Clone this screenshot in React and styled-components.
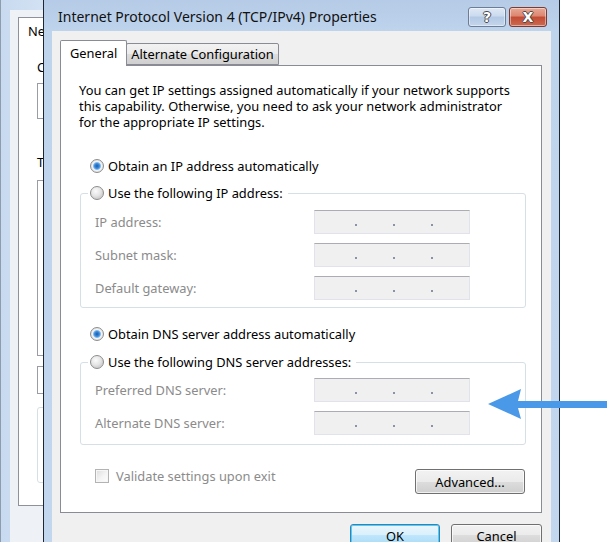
import React from 'react';
import styled, { createGlobalStyle } from 'styled-components';

const GlobalStyle = createGlobalStyle`
  html, body { margin: 0; padding: 0; background: #fff; }
  body {
    font-family: "Noto Sans", "Open Sans", sans-serif;
    font-size: 12.85px;
    color: #000;
  }
  * { box-sizing: border-box; }
`;

const Desktop = styled.div`
  position: relative;
  width: 607px;
  height: 542px;
  overflow: hidden;
  background: #fff;
`;

/* ---- window behind (adapter properties), only its left strip shows ---- */

const BackWindow = styled.div`
  position: absolute;
  left: 0;
  top: -20px;
  width: 44px;
  height: 600px;
  overflow: hidden;
  border-left: 1px solid #8f9cab;
  background: linear-gradient(to right, #c8daf0, #d3e2f3);
  padding: 30px 0 0 9px;
`;

const BackClient = styled.div`
  height: 100%;
  width: 300px;
  background: #eef1f5;
  padding: 7px 0 0 8px;
`;

const BackPanel = styled.div`
  height: 489px;
  background: #fff;
  border: 1px solid #8e9199;
  padding: 5px 0 0 18px;
`;

const BackTab = styled.div`
  margin-left: -9px;
  line-height: 16px;
`;

const BackLabel = styled.div`
  margin-top: ${p => p.$top}px;
  line-height: 16px;
  white-space: nowrap;
`;

const BackBox = styled.div`
  margin-top: ${p => p.$top}px;
  height: ${p => p.$h}px;
  width: 240px;
  border: 1px solid ${p => p.$soft ? '#d5dfe5' : '#9a9da5'};
  border-radius: ${p => p.$soft ? 3 : 0}px;
  background: #fff;
`;

/* ---- the dialog ---- */

const Dialog = styled.div`
  position: absolute;
  left: 43px;
  top: -8px;
  width: 517px;
  height: 600px;
  border: 1px solid #1d2733;
  background: linear-gradient(to bottom, #b3c9e5 0, #bed3ec 38px, #c3d7ef 100%);
  padding: 0 8px;
  display: flex;
  flex-direction: column;
`;

const TitleBar = styled.div`
  height: 38px;
  flex: none;
  display: flex;
  align-items: flex-end;
  padding: 0 4px 4px 6px;
`;

const Title = styled.div`
  flex: 1;
  line-height: 20px;
  font-size: 14px;
  color: #111;
  white-space: nowrap;
`;

const CaptionButton = styled.div`
  width: 38px;
  height: 20px;
  border-radius: 3px;
  margin-left: 3px;
  display: flex;
  align-items: center;
  justify-content: center;
  font-family: "DejaVu Sans", sans-serif;
  font-weight: bold;
  font-size: 14px;
  color: #fff;
  text-shadow: -1px 0 #4a4a4a, 1px 0 #4a4a4a, 0 -1px #4a4a4a, 0 1px #4a4a4a;
  border: 1px solid ${p => p.$close ? '#7a3b33' : '#6c7d95'};
  background: ${p => p.$close
    ? 'linear-gradient(#e9a895 0%, #dc8670 45%, #c24b33 50%, #cc6a52 100%)'
    : 'linear-gradient(#dfe9f5 0%, #cbdaee 45%, #b2c8e4 50%, #c4d6ec 100%)'};
  box-shadow: inset 0 0 0 1px rgba(255, 255, 255, 0.45);
`;

const Client = styled.div`
  flex: 1;
  background: #f0f0f0;
  padding: 9px 9px 0 8px;
`;

const TabStrip = styled.div`
  height: 25px;
  display: flex;
  align-items: flex-end;
`;

const Tab = styled.div`
  position: relative;
  height: ${p => p.$active ? 26 : 22}px;
  margin-bottom: ${p => p.$active ? -1 : 0}px;
  padding: 0 ${p => p.$active ? 9 : 4}px;
  margin-left: ${p => p.$active ? 0 : -1}px;
  z-index: ${p => p.$active ? 1 : 0};
  border: 1px solid #898c95;
  border-bottom: ${p => p.$active ? 'none' : '1px solid #898c95'};
  border-radius: 2px 2px 0 0;
  background: ${p => p.$active
    ? '#fff'
    : 'linear-gradient(#f2f2f2 0%, #ebebeb 50%, #dddddd 50%, #cfcfcf 100%)'};
  line-height: ${p => p.$active ? 24 : 20}px;
  white-space: nowrap;
`;

const Panel = styled.div`
  width: 482px;
  height: 448px;
  background: #fff;
  border: 1px solid #898c95;
  padding: 16px 15px 0 18px;
`;

const Intro = styled.p`
  margin: 0;
  line-height: 16px;
  white-space: nowrap;
`;

const RadioRow = styled.label`
  display: flex;
  align-items: center;
  height: 18px;
  gap: 4px;
  margin: ${p => p.$top}px 0 0 ${p => p.$inset ?? 11}px;
  white-space: nowrap;
`;

const RadioDot = styled.span`
  width: 14px;
  height: 14px;
  flex: none;
  border-radius: 50%;
  border: 1px solid #8d8d8d;
  background: ${p => p.$checked
    ? 'radial-gradient(circle, #1c5aa8 0, #3c8ee0 2.5px, #8fc0ee 3.6px, #f4f4f4 4.4px, #e2e2e2 6px)'
    : 'radial-gradient(circle at 40% 35%, #fbfbfb 0, #e4e4e4 5px, #d2d2d2 7px)'};
`;

const Group = styled.fieldset`
  margin: ${p => p.$top}px 0 0 1px;
  border: 1px solid #d5dfe5;
  border-radius: 3px;
  padding: ${p => p.$pt}px 55px ${p => p.$pb}px 14px;
  display: flex;
  flex-direction: column;
  gap: 9px;
  min-width: 0;
`;

const Legend = styled.legend`
  padding: 0 5px 0 2px;
  margin-left: -7px;
`;

const FieldRow = styled.div`
  display: flex;
  align-items: center;
  justify-content: space-between;
  height: 24px;
`;

const FieldLabel = styled.span`
  color: #8b8b8b;
`;

const IpBox = styled.div`
  width: 156px;
  height: 24px;
  background: #f0f0f0;
  border: 1px solid #e2e3ea;
  border-top-color: #abadb3;
  display: flex;
  align-items: flex-end;
  padding: 0 0 7px 40px;
  gap: 36px;
`;

const IpDot = styled.span`
  width: 2px;
  height: 2px;
  background: #8a93a6;
`;

const BottomRow = styled.div`
  display: flex;
  justify-content: space-between;
  margin-top: 24px;
  padding: 0 1px 0 16px;
`;

const CheckRow = styled.label`
  display: flex;
  align-items: center;
  gap: 7px;
  height: 16px;
  margin-top: -1px;
  color: #8b8b8b;
`;

const CheckBox = styled.span`
  width: 14px;
  height: 14px;
  border: 1px solid #b3b3b3;
  background: linear-gradient(135deg, #dcdcdc 0%, #f4f4f4 55%, #fdfdfd 100%);
  box-shadow: inset 0 0 0 1px #f6f6f6;
`;

const PushButton = styled.div`
  width: ${p => p.$w}px;
  height: ${p => p.$h || 23}px;
  display: flex;
  align-items: center;
  justify-content: center;
  border-radius: 3px;
  border: 1px solid ${p => p.$default ? '#3c7fb1' : '#707070'};
  background: ${p => p.$default
    ? 'linear-gradient(#eaf6fd 0%, #d9f0fc 50%, #bee6fd 50%, #a7d9f5 100%)'
    : 'linear-gradient(#f2f2f2 0%, #ebebeb 50%, #dddddd 50%, #cfcfcf 100%)'};
  box-shadow: inset 0 0 0 1px ${p => p.$default ? '#48d0fb' : 'rgba(255, 255, 255, 0.7)'};
`;

const ButtonRow = styled.div`
  display: flex;
  justify-content: flex-end;
  gap: 11px;
  margin-top: 11px;
`;

const Arrow = styled.svg`
  position: absolute;
  left: 480px;
  top: 380px;
`;

function IpField({ label }) {
  return (
    <FieldRow>
      <FieldLabel>{label}</FieldLabel>
      <IpBox>
        <IpDot />
        <IpDot />
        <IpDot />
      </IpBox>
    </FieldRow>
  );
}

export default function App() {
  return (
    <Desktop>
      <GlobalStyle />

      <BackWindow>
        <BackClient>
          <BackPanel>
            <BackTab>Networking</BackTab>
            <BackLabel $top={20}>Connect using:</BackLabel>
            <BackBox $top={8} $h={36} />
            <BackLabel $top={35}>This connection uses the following items:</BackLabel>
            <BackBox $top={10} $h={176} />
            <BackBox $top={10} $h={28} />
            <BackBox $top={13} $h={76} $soft />
          </BackPanel>
        </BackClient>
      </BackWindow>

      <Dialog>
        <TitleBar>
          <Title>Internet Protocol Version 4 (TCP/IPv4) Properties</Title>
          <CaptionButton>?</CaptionButton>
          <CaptionButton $close>X</CaptionButton>
        </TitleBar>
        <Client>
          <TabStrip>
            <Tab $active>General</Tab>
            <Tab>Alternate Configuration</Tab>
          </TabStrip>
          <Panel>
            <Intro>
              You can get IP settings assigned automatically if your network supports<br />
              this capability. Otherwise, you need to ask your network administrator<br />
              for the appropriate IP settings.
            </Intro>

            <RadioRow $top={27}>
              <RadioDot $checked />
              Obtain an IP address automatically
            </RadioRow>
            <Group $top={9} $pt={8} $pb={7}>
              <Legend>
                <RadioRow $top={0} $inset={0}>
                  <RadioDot />
                  Use the following IP address:
                </RadioRow>
              </Legend>
              <IpField label="IP address:" />
              <IpField label="Subnet mask:" />
              <IpField label="Default gateway:" />
            </Group>

            <RadioRow $top={17}>
              <RadioDot $checked />
              Obtain DNS server address automatically
            </RadioRow>
            <Group $top={10} $pt={7} $pb={9}>
              <Legend>
                <RadioRow $top={0} $inset={0}>
                  <RadioDot />
                  Use the following DNS server addresses:
                </RadioRow>
              </Legend>
              <IpField label="Preferred DNS server:" />
              <IpField label="Alternate DNS server:" />
            </Group>

            <BottomRow>
              <CheckRow>
                <CheckBox />
                Validate settings upon exit
              </CheckRow>
              <PushButton $w={110} $h={25}>Advanced...</PushButton>
            </BottomRow>
          </Panel>
          <ButtonRow>
            <PushButton $w={90} $default>OK</PushButton>
            <PushButton $w={91}>Cancel</PushButton>
          </ButtonRow>
        </Client>
      </Dialog>

      <Arrow width="127" height="50" viewBox="0 0 127 50">
        <polygon
          points="8,24 41,9 38,21 127,21 127,28 38,28 41,39"
          fill="#4a99e9"
        />
      </Arrow>
    </Desktop>
  );
}
